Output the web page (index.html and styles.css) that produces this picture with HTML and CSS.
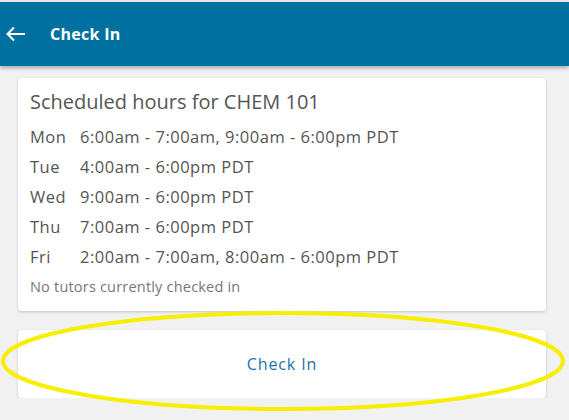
FILE: index.html
```html
<!DOCTYPE html>
<html lang="en">
<head>
    <meta charset="UTF-8">
    <meta name="viewport" content="width=device-width, initial-scale=1.0">
    <title>Check In</title>
    <link rel="stylesheet" href="styles.css">
</head>
<body>
    <header class="toolbar">
        <button class="back-btn" aria-label="Back">
            <svg width="20" height="16" viewBox="0 0 20 16">
                <path d="M19 8H2M8 1.5L1.5 8L8 14.5" fill="none" stroke="#fff" stroke-width="2"/>
            </svg>
        </button>
        <h1>Check In</h1>
    </header>

    <main class="content">
        <div class="card schedule">
            <h2>Scheduled hours for CHEM 101</h2>
            <ul class="hours">
                <li><span class="day">Mon</span><span>6:00am - 7:00am, 9:00am - 6:00pm PDT</span></li>
                <li><span class="day">Tue</span><span>4:00am - 6:00pm PDT</span></li>
                <li><span class="day">Wed</span><span>9:00am - 6:00pm PDT</span></li>
                <li><span class="day">Thu</span><span>7:00am - 6:00pm PDT</span></li>
                <li><span class="day">Fri</span><span>2:00am - 7:00am, 8:00am - 6:00pm PDT</span></li>
            </ul>
            <p class="tutors">No tutors currently checked in</p>
        </div>

        <button class="card check-in">Check In</button>
    </main>

    <!-- highlight drawn over the button in the screenshot -->
    <svg class="highlight" width="569" height="420" viewBox="0 0 569 420">
        <ellipse cx="283" cy="361" rx="280" ry="48" fill="none" stroke="#f7ee00" stroke-width="4"/>
    </svg>
</body>
</html>
```

FILE: styles.css
```css
* {
    box-sizing: border-box;
    margin: 0;
    padding: 0;
}
body {
    font-family: 'Open Sans', Lato, sans-serif;
    background-color: #f1f1f1;
    color: #555;
    border-top: 2px solid #e6e6e6;
}
.toolbar {
    height: 64px;
    display: flex;
    align-items: center;
    background-color: #0070a1;
    box-shadow: 0 2px 4px rgba(0, 0, 0, 0.3);
    color: #fff;
}
.back-btn {
    background: none;
    border: none;
    width: 50px;
    padding-left: 6px;
    display: flex;
    align-items: center;
}
.toolbar h1 {
    font-size: 16px;
    font-weight: 700;
    letter-spacing: 0.3px;
}
.content {
    padding: 12px 23px 0 18px;
}
.card {
    display: block;
    width: 100%;
    background-color: #fff;
    border-radius: 4px;
    box-shadow: 0 1px 3px rgba(0, 0, 0, 0.18);
}
.schedule {
    padding: 11px 12px 14px;
}
.schedule h2 {
    font-size: 20px;
    font-weight: 400;
    color: #555;
    line-height: 26px;
    margin-bottom: 6px;
}
.hours {
    list-style: none;
}
.hours li {
    display: flex;
    height: 30px;
    align-items: center;
    font-size: 16.5px;
    letter-spacing: 0.5px;
}
.hours .day {
    width: 50px;
}
.tutors {
    font-size: 14.5px;
    letter-spacing: 0.2px;
    color: #777;
    line-height: 20px;
    margin-top: 6px;
}
.check-in {
    margin-top: 19px;
    height: 68px;
    border: none;
    font-family: inherit;
    font-size: 16px;
    letter-spacing: 0.9px;
    color: #1a74a6;
}
.highlight {
    position: absolute;
    top: 0;
    left: 0;
    pointer-events: none;
}
```
